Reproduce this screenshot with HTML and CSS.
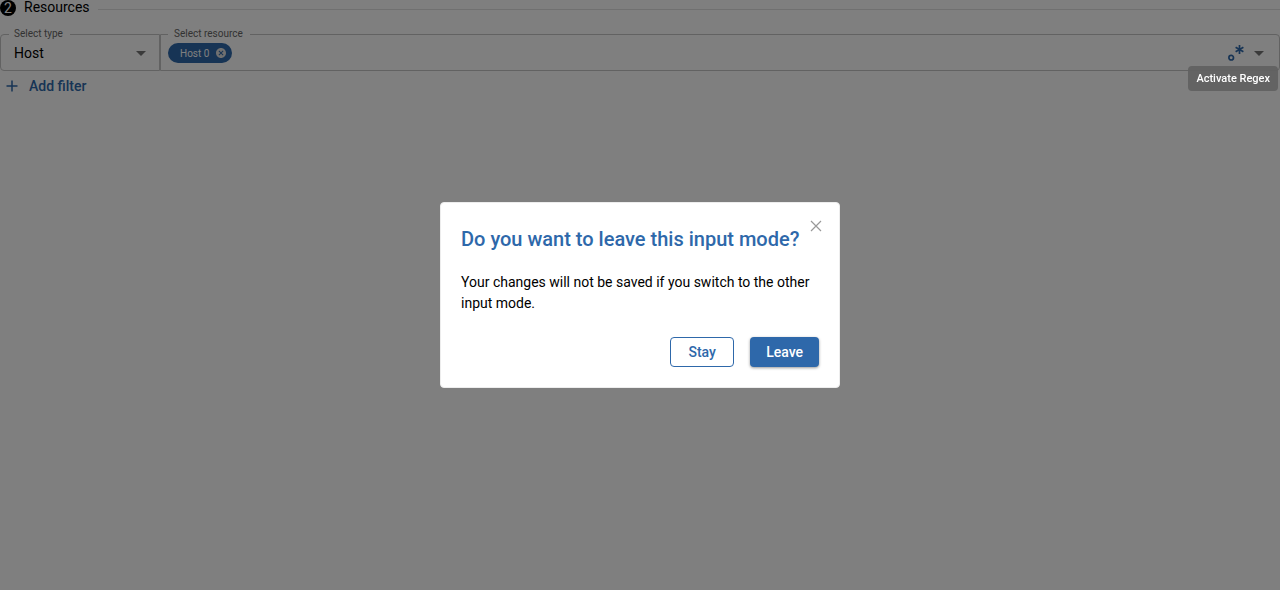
FILE: index.html
```html
<!DOCTYPE html>
<html lang="en">
<head>
<meta charset="utf-8">
<meta name="viewport" content="width=device-width, initial-scale=1">
<title>Resources</title>
<link rel="stylesheet" href="styles.css">
</head>
<body>
<main class="resources">
  <header class="section-header">
    <span class="step">2</span>
    <h2 class="section-title">Resources</h2>
    <hr class="section-line">
  </header>
  <div class="filters">
    <fieldset class="field field-type">
      <legend class="field-legend"><label for="type">Select type</label></legend>
      <div class="field-body">
        <select class="type-select" id="type"><option>Host</option></select>
        <svg class="arrow" viewBox="0 0 24 24" aria-hidden="true"><path d="M7 10l5 5 5-5z"/></svg>
      </div>
    </fieldset>
    <fieldset class="field field-resource">
      <legend class="field-legend"><label for="resource">Select resource</label></legend>
      <div class="field-body">
        <span class="chip">Host 0
          <button class="chip-remove" type="button" aria-label="Remove Host 0">
            <svg class="chip-icon" viewBox="0 0 24 24"><path d="M12 2C6.47 2 2 6.47 2 12s4.47 10 10 10 10-4.47 10-10S17.53 2 12 2zm5 13.59L15.59 17 12 13.41 8.41 17 7 15.59 10.59 12 7 8.41 8.41 7 12 10.59 15.59 7 17 8.41 13.41 12 17 15.59z"/></svg>
          </button>
        </span>
        <input class="resource-input" id="resource" type="text">
        <button class="regex" type="button" aria-label="Activate Regex">
          <svg class="regex-icon" viewBox="0 0 16 16"><circle cx="3.2" cy="12.7" r="2.3"/><path d="M11.5 0v9M7.6 2.2l7.8 4.6M15.4 2.2L7.6 6.8"/></svg>
        </button>
        <button class="open" type="button" aria-label="Open">
          <svg class="arrow" viewBox="0 0 24 24"><path d="M7 10l5 5 5-5z"/></svg>
        </button>
      </div>
    </fieldset>
  </div>
  <button class="add-filter" type="button">
    <svg class="add-icon" viewBox="0 0 16 16" aria-hidden="true"><path d="M8 2.5v11M2.5 8h11"/></svg>
    Add filter
  </button>
</main>
<div class="backdrop">
  <section class="modal" role="dialog" aria-modal="true" aria-labelledby="modal-title">
    <button class="modal-close" type="button" aria-label="Close">
      <svg class="close-icon" viewBox="0 0 12 12"><path d="M1 1l10 10M11 1L1 11"/></svg>
    </button>
    <h1 class="modal-title" id="modal-title">Do you want to leave this input mode?</h1>
    <p class="modal-text">Your changes will not be saved if you switch to the other input mode.</p>
    <div class="modal-actions">
      <button class="btn btn-outline" type="button">Stay</button>
      <button class="btn btn-primary" type="button">Leave</button>
    </div>
  </section>
</div>
<div class="tooltip" role="tooltip">Activate Regex</div>
</body>
</html>
```
FILE: styles.css
```css
* {
  box-sizing: border-box;
}

body {
  margin: 0;
  background: #fff;
  color: #000;
  font-family: Roboto, "Liberation Sans", sans-serif;
  font-size: 14px;
}

button,
input,
select {
  margin: 0;
  padding: 0;
  border: 0;
  background: none;
  color: inherit;
  font: inherit;
}

.section-header {
  display: flex;
  align-items: flex-start;
  height: 16px;
  margin-bottom: 12px;
}

.step {
  width: 16px;
  height: 16px;
  border-radius: 50%;
  background: #000;
  color: #fff;
  line-height: 16px;
  text-align: center;
}

.section-title {
  margin: 0 8px;
  font-size: 14px;
  font-weight: 400;
  line-height: 14px;
}

.section-line {
  flex: 1;
  margin: 9px 0 0;
  border: 0;
  border-top: 1px solid #e0e0e0;
}

.filters {
  display: flex;
}

.field {
  min-width: 0;
  margin: 0;
  padding: 0 8px 5px;
  border: 1px solid #c4c4c4;
}

.field-type {
  width: 160px;
  border-radius: 4px 0 0 4px;
}

.field-resource {
  flex: 1;
  padding-left: 7px;
  border-radius: 0 4px 4px 0;
}

.field-legend {
  padding: 0 7px 2px 5px;
  color: #666;
  font-size: 10px;
  line-height: 11px;
}

.field-resource .field-legend {
  padding-left: 6px;
}

.field-body {
  display: flex;
  align-items: center;
  height: 24px;
}

.type-select {
  flex: 1;
  padding-left: 5px;
  appearance: none;
}

.arrow {
  display: block;
  width: 24px;
  height: 24px;
  fill: #757575;
}

.field-type .arrow {
  margin-right: -2px;
}

.chip {
  display: flex;
  align-items: center;
  gap: 6px;
  height: 20px;
  padding: 0 5px 0 12px;
  border-radius: 10px;
  background: #2e68aa;
  color: #fff;
  font-size: 10px;
}

.chip-icon {
  display: block;
  width: 12px;
  height: 12px;
  fill: #e0e0e0;
}

.resource-input {
  flex: 1;
  min-width: 0;
}

.regex-icon {
  display: block;
  width: 16px;
  height: 16px;
  fill: none;
  stroke: #2e68aa;
  stroke-width: 1.7;
}

.open {
  margin-left: 3px;
}

.add-filter {
  display: flex;
  align-items: center;
  gap: 9px;
  height: 30px;
  padding: 0 4px;
  color: #2e68aa;
  font-weight: 500;
}

.add-icon {
  width: 16px;
  height: 16px;
  fill: none;
  stroke: #2e68aa;
  stroke-width: 1.5;
}

.backdrop {
  position: fixed;
  inset: 0;
  display: flex;
  align-items: center;
  justify-content: center;
  background: rgba(0, 0, 0, 0.5);
}

.modal {
  position: relative;
  width: 400px;
  padding: 20px;
  border: 1px solid #ededed;
  border-radius: 4px;
  background: #fff;
}

.modal-close {
  position: absolute;
  top: 17px;
  right: 17px;
}

.close-icon {
  display: block;
  width: 12px;
  height: 12px;
  fill: none;
  stroke: #999;
  stroke-width: 1.2;
}

.modal-title {
  margin: 0 0 17px;
  color: #2e68aa;
  font-size: 20px;
  font-weight: 500;
  line-height: 32px;
  white-space: nowrap;
}

.modal-text {
  margin: 0;
  line-height: 21px;
}

.modal-actions {
  display: flex;
  justify-content: flex-end;
  gap: 16px;
  margin-top: 23px;
}

.btn {
  height: 30px;
  padding: 0 16px;
  border-radius: 4px;
  font-weight: 500;
}

.btn-outline {
  min-width: 64px;
  border: 1px solid #2e68aa;
  color: #2e68aa;
}

.btn-primary {
  background: #2e68aa;
  color: #fff;
  box-shadow: 0 1px 3px rgba(0, 0, 0, 0.4);
}

.tooltip {
  position: fixed;
  top: 66px;
  right: 2px;
  padding: 0 8px;
  border-radius: 4px;
  background: rgba(97, 97, 97, 0.92);
  color: #fff;
  font-size: 11px;
  font-weight: 500;
  line-height: 25px;
}
```
